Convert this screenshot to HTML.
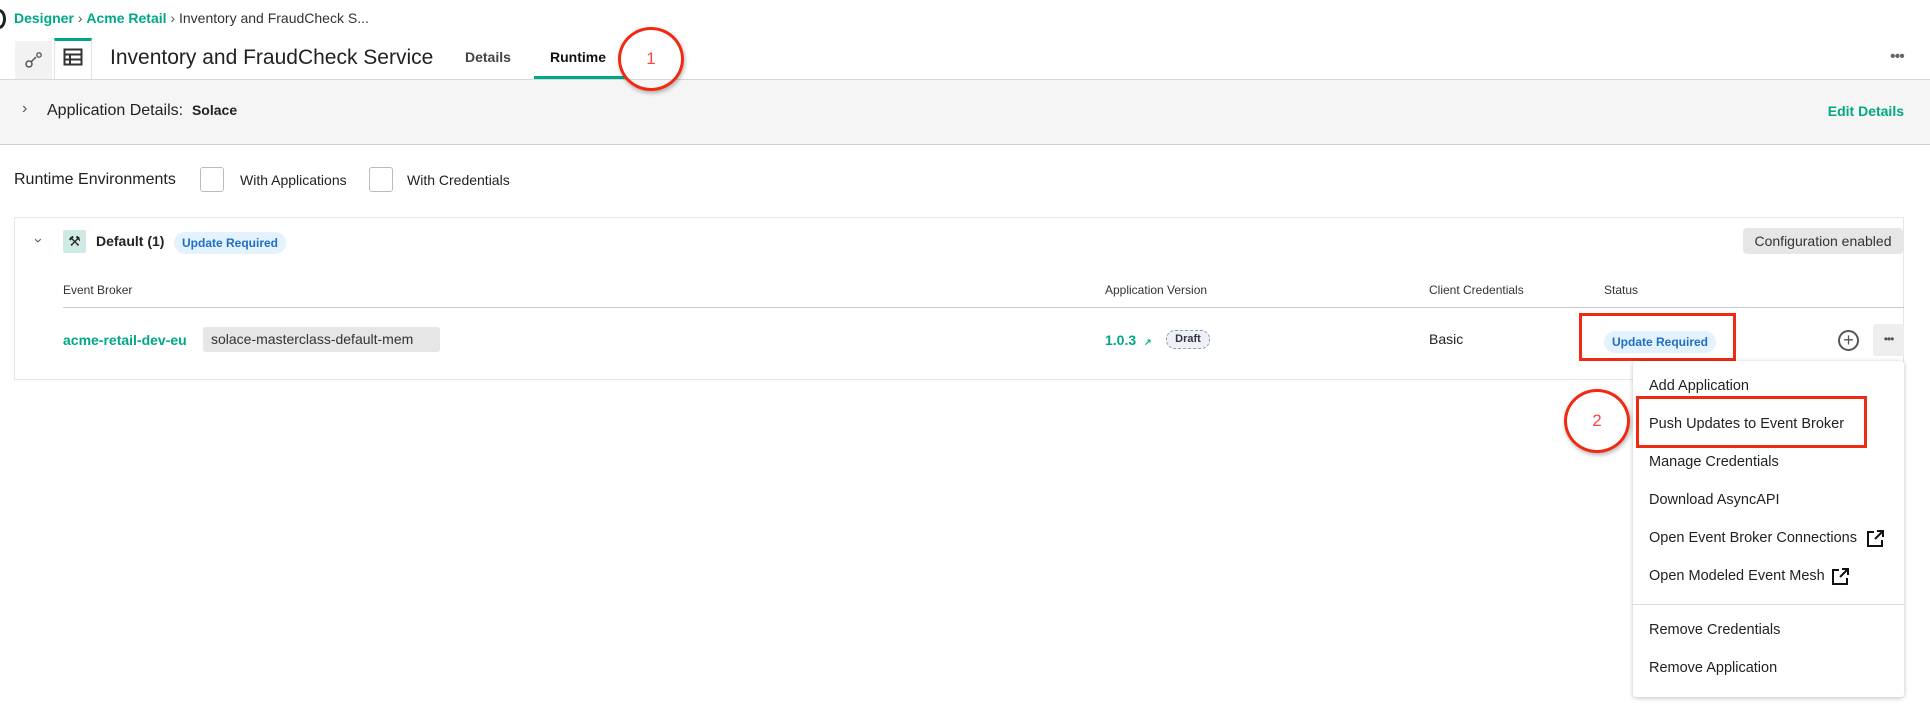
<!DOCTYPE html>
<html><head><meta charset="utf-8"><style>
*{box-sizing:border-box;margin:0;padding:0}
body{width:1930px;height:719px;background:#fff;font-family:"Liberation Sans",sans-serif;color:#222;position:relative;overflow:hidden}
.a{position:absolute;white-space:nowrap}
.teal{color:#00a887}
.badge{position:absolute;background:#e3f2fd;color:#1f6fc4;font-weight:bold;font-size:12px;border-radius:11px;padding:4px 8px}
.mi{position:absolute;left:1649px;font-size:14.5px;color:#222}
</style></head><body>
<div class="a" style="left:-8px;top:9px;width:14px;height:20px;border:3px solid #222;border-radius:50%"></div>
<div class="a" style="left:14px;top:10px;font-size:14px"><b class="teal">Designer</b> <span style="color:#555">›</span> <b class="teal">Acme Retail</b> <span style="color:#555">›</span> <span style="color:#333">Inventory and FraudCheck S...</span></div>
<div class="a" style="left:15px;top:41px;width:37px;height:38px;background:#f2f2f2"></div>
<svg class="a" style="left:24px;top:51px" width="20" height="18" viewBox="0 0 20 18"><circle cx="5" cy="13" r="3" fill="none" stroke="#555" stroke-width="1.5"/><line x1="7" y1="11" x2="12" y2="6" stroke="#555" stroke-width="1.5"/><circle cx="15" cy="4" r="2.2" fill="none" stroke="#555" stroke-width="1.3"/></svg>
<div class="a" style="left:54px;top:38px;width:38px;height:41px;border-top:3px solid #00a887;border-left:1px solid #e0e0e0;border-right:1px solid #e0e0e0;background:#fff"></div>
<svg class="a" style="left:63px;top:48px" width="20" height="18" viewBox="0 0 20 18"><rect x="1.5" y="1.5" width="17" height="15" fill="none" stroke="#333" stroke-width="2"/><line x1="1.5" y1="6.5" x2="18.5" y2="6.5" stroke="#333" stroke-width="2"/><line x1="1.5" y1="11.5" x2="18.5" y2="11.5" stroke="#333" stroke-width="2"/><line x1="7" y1="6" x2="7" y2="16" stroke="#333" stroke-width="2"/></svg>
<div class="a" style="left:110px;top:46px;font-size:21px;color:#222">Inventory and FraudCheck Service</div>
<div class="a" style="left:465px;top:49px;font-size:14px;color:#444;font-weight:bold">Details</div>
<div class="a" style="left:550px;top:49px;font-size:14px;color:#111;font-weight:bold">Runtime</div>
<div class="a" style="left:534px;top:76px;width:91px;height:3px;background:#00a887"></div>
<div class="a" style="left:1890px;top:48px;font-size:16px;color:#666;letter-spacing:-1px">•••</div>
<div class="a" style="left:0;top:79px;width:1930px;height:66px;background:#f5f5f5;border-top:1px solid #d8d8d8;border-bottom:1px solid #d0d0d0"></div>
<div class="a" style="left:22px;top:100px;font-size:16px;color:#555">›</div>
<div class="a" style="left:47px;top:102px;font-size:16px;color:#222">Application Details: &nbsp;<b style="font-size:14px">Solace</b></div>
<div class="a teal" style="right:26px;top:103px;font-size:14px;font-weight:bold">Edit Details</div>
<div class="a" style="left:14px;top:171px;font-size:16px;color:#222">Runtime Environments</div>
<div class="a" style="left:200px;top:167px;width:24px;height:25px;border:1px solid #bbb;border-radius:3px"></div>
<div class="a" style="left:240px;top:172px;font-size:14px">With Applications</div>
<div class="a" style="left:369px;top:167px;width:24px;height:25px;border:1px solid #bbb;border-radius:3px"></div>
<div class="a" style="left:407px;top:172px;font-size:14px">With Credentials</div>
<div class="a" style="left:14px;top:217px;width:1890px;height:163px;border:1px solid #e6e6e6"></div>
<div class="a" style="left:36px;top:232px;font-size:15px;color:#555;transform:rotate(90deg)">›</div>
<div class="a" style="left:63px;top:230px;width:23px;height:23px;background:#cfe9e5;border-radius:2px;font-size:14px;text-align:center;line-height:23px">⚒</div>
<div class="a" style="left:96px;top:233px;font-size:14px;font-weight:bold">Default (1)</div>
<div class="badge" style="left:174px;top:232px">Update Required</div>
<div class="a" style="left:1743px;top:228px;width:160px;height:26px;background:#e6e6e6;border-radius:4px;font-size:14px;text-align:center;line-height:26px;color:#333">Configuration enabled</div>
<div class="a" style="left:63px;top:283px;font-size:12px;color:#333">Event Broker</div>
<div class="a" style="left:1105px;top:283px;font-size:12px;color:#333">Application Version</div>
<div class="a" style="left:1429px;top:283px;font-size:12px;color:#333">Client Credentials</div>
<div class="a" style="left:1604px;top:283px;font-size:12px;color:#333">Status</div>
<div class="a" style="left:63px;top:307px;width:1841px;height:1px;background:#ccc"></div>
<div class="a teal" style="left:63px;top:332px;font-size:14px;font-weight:bold">acme-retail-dev-eu</div>
<div class="a" style="left:203px;top:327px;width:237px;height:25px;background:#e6e6e6;border-radius:3px;font-size:14px;line-height:25px;padding-left:8px;color:#333">solace-masterclass-default-mem</div>
<div class="a teal" style="left:1105px;top:332px;font-size:14px;font-weight:bold">1.0.3 <span style="font-size:9px;margin-left:4px">↗</span></div>
<div class="a" style="left:1166px;top:330px;width:44px;height:19px;border:1px dashed #99a;border-radius:9px;background:#eef0f7;font-size:11px;font-weight:bold;color:#334;text-align:center;line-height:17px">Draft</div>
<div class="a" style="left:1429px;top:331px;font-size:14px">Basic</div>
<div class="badge" style="left:1604px;top:331px">Update Required</div>
<div class="a" style="left:1579px;top:313px;width:157px;height:48px;border:3px solid #f02a12"></div>
<div class="a" style="left:1838px;top:330px;width:21px;height:21px;border:2px solid #555;border-radius:50%;text-align:center;line-height:16px;font-size:18px;color:#555">+</div>
<div class="a" style="left:1873px;top:324px;width:31px;height:32px;background:#eee;border-radius:3px;text-align:center;line-height:30px;font-size:12px;color:#555;letter-spacing:-1px">•••</div>
<div class="a" style="left:1633px;top:361px;width:271px;height:336px;background:#fff;border-radius:3px;box-shadow:0 1px 5px rgba(0,0,0,.25)"></div>
<div class="mi" style="top:378px">Add Application</div>
<div class="mi" style="top:416px">Push Updates to Event Broker</div>
<div class="mi" style="top:454px">Manage Credentials</div>
<div class="mi" style="top:492px">Download AsyncAPI</div>
<div class="mi" style="top:530px">Open Event Broker Connections</div>
<div class="mi" style="top:568px">Open Modeled Event Mesh</div>
<svg class="a" style="left:1866px;top:529px" width="19" height="19" viewBox="0 0 19 19"><path d="M8 3H2v14h14v-6M11 2h6v6M17 2l-8 8" fill="none" stroke="#111" stroke-width="2"/></svg>
<svg class="a" style="left:1831px;top:567px" width="19" height="19" viewBox="0 0 19 19"><path d="M8 3H2v14h14v-6M11 2h6v6M17 2l-8 8" fill="none" stroke="#111" stroke-width="2"/></svg>
<div class="a" style="left:1633px;top:604px;width:271px;height:1px;background:#ddd"></div>
<div class="mi" style="top:622px">Remove Credentials</div>
<div class="mi" style="top:660px">Remove Application</div>
<div class="a" style="left:1636px;top:396px;width:231px;height:52px;border:3px solid #f02a12"></div>
<div class="a" style="left:1564px;top:389px;width:66px;height:64px;border:3px solid #f02a12;border-radius:50%;color:#f44;font-size:17px;text-align:center;line-height:58px;box-shadow:1px 2px 4px rgba(0,0,0,.3)">2</div>
<div class="a" style="left:618px;top:27px;width:66px;height:64px;border:3px solid #f02a12;border-radius:50%;color:#f44;font-size:17px;text-align:center;line-height:58px;box-shadow:1px 2px 4px rgba(0,0,0,.3)">1</div>
</body></html>
